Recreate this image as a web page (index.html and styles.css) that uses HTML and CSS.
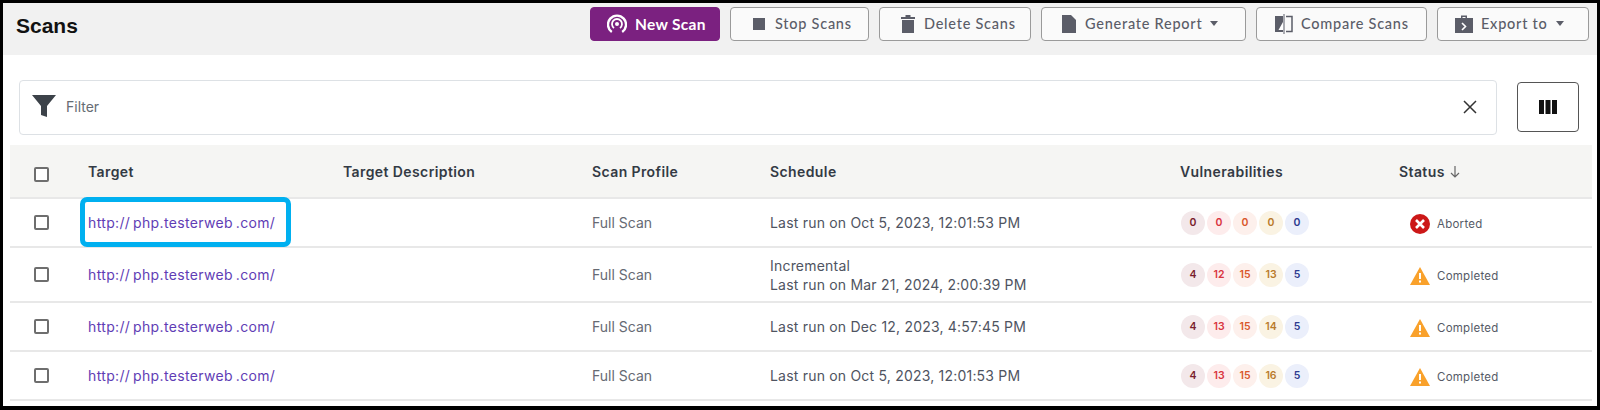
FILE: index.html
```html
<!DOCTYPE html>
<html lang="en">
<head>
<meta charset="utf-8">
<title>Scans</title>
<link rel="stylesheet" href="styles.css">
</head>
<body>
<div class="frame">
  <header class="topbar">
    <h1 class="title">Scans</h1>
    <div class="actions">
      <button class="btn btn-primary w-new"><svg class="ico" viewBox="0 0 20 20"><path d="M4.800 18a9 9 0 1 1 10.400 0" fill="none" stroke="#fff" stroke-width="2.400"/><path d="M7 14a5 5 0 1 1 6 0" fill="none" stroke="#fff" stroke-width="1.800"/><circle cx="10" cy="10" r="2" fill="#fff"/></svg>New Scan</button>
      <button class="btn w-stop"><svg class="ico-s" viewBox="0 0 12 12"><rect width="12" height="12" fill="#5b5d68"/></svg>Stop Scans</button>
      <button class="btn w-del"><svg class="ico-d" viewBox="0 0 16 20"><path d="M5.500 1h5v2H15v2H1V3h4.500zM2 6h12v13H2z" fill="#5b5d68"/></svg>Delete Scans</button>
      <button class="btn w-gen"><svg class="ico-d" viewBox="0 0 16 20"><path d="M1 1h9l5 5v13H1z" fill="#5b5d68"/></svg>Generate Report<span class="caret"></span></button>
      <button class="btn w-cmp"><svg class="ico-c" viewBox="0 0 18 20"><path d="M0 2h8v16H0z" fill="#5b5d68"/><path d="M8 8v8H3.500z" fill="#fff"/><path d="M9 0v20" stroke="#5b5d68" stroke-width="1"/><path d="M11 2.500h6v15h-6" fill="none" stroke="#5b5d68" stroke-width="1.500"/></svg>Compare Scans</button>
      <button class="btn w-exp"><svg class="ico-c" viewBox="0 0 18 20"><path d="M6 4V1.500h6V4h6v15H0V4zM7.500 4h3V3h-3z" fill="#5b5d68"/><path d="M7 9l3.500 3.500L7 16" fill="none" stroke="#fff" stroke-width="1.600"/></svg>Export to<span class="caret"></span></button>
    </div>
  </header>

  <section class="filter-row">
    <div class="filter">
      <svg class="funnel" viewBox="0 0 24 24"><path d="M0 1h24L15 12v11l-6-2V12z" fill="#3c4249"/></svg>
      <span class="filter-label">Filter</span>
      <svg class="clear" viewBox="0 0 14 14"><path d="M1 1l12 12M13 1L1 13" stroke="#333" stroke-width="1.500" fill="none"/></svg>
    </div>
    <button class="col-btn"><svg class="col-ico" viewBox="0 0 18 14"><path d="M0 0h5v14H0zM6.500 0h5v14h-5zM13 0h5v14h-5z" fill="#111"/></svg></button>
  </section>

  <section class="table">
    <div class="row head">
      <div class="cell check"><span class="box"></span></div>
      <div class="cell">Target</div>
      <div class="cell">Target Description</div>
      <div class="cell">Scan Profile</div>
      <div class="cell">Schedule</div>
      <div class="cell">Vulnerabilities</div>
      <div class="cell">Status <svg class="sort" viewBox="0 0 10 12"><path d="M5 0v11M1 7l4 4 4-4" fill="none" stroke="#666" stroke-width="1.200"/></svg></div>
    </div>

    <div class="row r-49">
      <div class="cell check"><span class="box"></span></div>
      <div class="cell target"><a class="link">http:// php.testerweb .com/</a><span class="highlight"></span></div>
      <div class="cell"></div>
      <div class="cell muted">Full Scan</div>
      <div class="cell sched">Last run on Oct 5, 2023, 12:01:53 PM</div>
      <div class="cell badges"><span class="b c">0</span><span class="b h">0</span><span class="b m">0</span><span class="b l">0</span><span class="b i">0</span></div>
      <div class="cell status"><svg class="st" viewBox="0 0 20 20"><circle cx="10" cy="10" r="10" fill="#cc1818"/><path d="M6 6l8 8M14 6l-8 8" stroke="#fff" stroke-width="2.600"/></svg>Aborted</div>
    </div>

    <div class="row r-55">
      <div class="cell check"><span class="box"></span></div>
      <div class="cell"><a class="link">http:// php.testerweb .com/</a></div>
      <div class="cell"></div>
      <div class="cell muted">Full Scan</div>
      <div class="cell sched"><div>Incremental<br>Last run on Mar 21, 2024, 2:00:39 PM</div></div>
      <div class="cell badges"><span class="b c">4</span><span class="b h">12</span><span class="b m">15</span><span class="b l">13</span><span class="b i">5</span></div>
      <div class="cell status"><svg class="st" viewBox="0 0 20 18"><path d="M10 0l10 18H0z" fill="#f9a12b"/><path d="M9 6h2v6H9zM9 13.500h2v2H9z" fill="#fff"/></svg>Completed</div>
    </div>

    <div class="row r-49">
      <div class="cell check"><span class="box"></span></div>
      <div class="cell"><a class="link">http:// php.testerweb .com/</a></div>
      <div class="cell"></div>
      <div class="cell muted">Full Scan</div>
      <div class="cell sched">Last run on Dec 12, 2023, 4:57:45 PM</div>
      <div class="cell badges"><span class="b c">4</span><span class="b h">13</span><span class="b m">15</span><span class="b l">14</span><span class="b i">5</span></div>
      <div class="cell status"><svg class="st" viewBox="0 0 20 18"><path d="M10 0l10 18H0z" fill="#f9a12b"/><path d="M9 6h2v6H9zM9 13.500h2v2H9z" fill="#fff"/></svg>Completed</div>
    </div>

    <div class="row r-49">
      <div class="cell check"><span class="box"></span></div>
      <div class="cell"><a class="link">http:// php.testerweb .com/</a></div>
      <div class="cell"></div>
      <div class="cell muted">Full Scan</div>
      <div class="cell sched">Last run on Oct 5, 2023, 12:01:53 PM</div>
      <div class="cell badges"><span class="b c">4</span><span class="b h">13</span><span class="b m">15</span><span class="b l">16</span><span class="b i">5</span></div>
      <div class="cell status"><svg class="st" viewBox="0 0 20 18"><path d="M10 0l10 18H0z" fill="#f9a12b"/><path d="M9 6h2v6H9zM9 13.500h2v2H9z" fill="#fff"/></svg>Completed</div>
    </div>
  </section>
</div>
</body>
</html>
```

FILE: styles.css
```css
* { box-sizing: border-box; }
html, body { margin: 0; height: 100%; }
body {
  background: #000;
  font-family: Inter, "Liberation Sans", sans-serif;
  overflow: hidden;
}
.frame {
  margin: 3px 3px 0 3px;
  height: 403px;
  background: #fff;
  overflow: hidden;
}
.topbar {
  height: 52px;
  background: #f1f1f1;
  display: flex;
  justify-content: space-between;
  padding: 4px 8px 0 13px;
}
.title {
  margin: 0;
  font: 700 21px/32px "Liberation Sans", sans-serif;
  color: #111;
  padding-top: 3px;
}
.actions { display: flex; gap: 10px; height: 34px; }
.btn {
  height: 34px;
  display: flex;
  align-items: center;
  justify-content: flex-start;
  gap: 8px;
  border: 1px solid #9a9a9a;
  border-radius: 4px;
  background: #fafafa;
  color: #5b5d68;
  font: 500 14.500px Lato, Inter, sans-serif;
  letter-spacing: 0.75px;
  padding: 0 0 1px;
}
.btn-primary {
  background: #7b2180;
  border-color: #7b2180;
  color: #fff;
  font-weight: 700;
  font-size: 15.500px;
  letter-spacing: 0.3px;
  gap: 8px;
}
.w-new { width: 130px; padding-left: 16px; }
.w-stop { width: 139px; padding-left: 22px; gap: 10px; }
.w-del { width: 152px; padding-left: 20px; }
.w-gen { width: 205px; padding-left: 19px; }
.w-cmp { width: 171px; padding-left: 18px; }
.w-exp { width: 152px; padding-left: 17px; }
.ico { width: 20px; height: 20px; flex: none; }
.ico-s { width: 12px; height: 12px; flex: none; }
.ico-d { width: 16px; height: 20px; flex: none; }
.ico-c { width: 18px; height: 20px; flex: none; }
.caret {
  width: 0;
  height: 0;
  border-left: 4.500px solid transparent;
  border-right: 4.500px solid transparent;
  border-top: 5px solid #5b5d68;
}
.filter-row {
  display: flex;
  align-items: center;
  gap: 20px;
  padding: 24px 7px 0 16px;
  height: 79px;
}
.filter {
  width: 1478px;
  height: 55px;
  border: 1px solid #dde1e5;
  border-radius: 4px;
  display: flex;
  align-items: center;
  padding: 0 19px 0 12px;
  margin-top: 1px;
}
.funnel { width: 24px; height: 24px; flex: none; margin-bottom: 2px; }
.filter-label { margin: 0 0 2px 10px; font-size: 14px; color: #666c73; flex: 1; }
.clear { width: 14px; height: 14px; }
.col-btn {
  width: 62px;
  height: 50px;
  border: 1px solid #555;
  border-radius: 4px;
  background: #fff;
  display: flex;
  align-items: center;
  justify-content: center;
  padding: 0;
  margin-top: 1px;
}
.col-ico { width: 18px; height: 14px; }
.table { margin: 11px 5px 0 7px; }
.row {
  display: grid;
  grid-template-columns: 78px 255px 249px 178px 410px 219px 1fr;
  align-items: center;
  border-bottom: 2px solid #e8e8e8;
  font-size: 14px;
  color: #555a66;
}
.head {
  height: 54px;
  background: #f5f5f3;
  font-weight: 600;
  font-size: 14px;
  color: #333a44;
  letter-spacing: 0.4px;
}
.r-49 { height: 49px; }
.r-55 { height: 55px; }
.cell { position: relative; min-width: 0; }
.check { padding-left: 24px; display: flex; }
.head .check { margin-top: 6px; }
.box {
  width: 15px;
  height: 15px;
  border: 2px solid #6e6e6e;
  border-radius: 2px;
  background: #fff;
}
.link { color: #5f3db5; font-size: 14px; letter-spacing: 0.35px; word-spacing: -1.5px; }
.highlight {
  position: absolute;
  left: -8px;
  top: -17px;
  width: 211px;
  height: 50px;
  border: 5px solid #00b0f0;
  border-radius: 7px;
}
.muted { color: #666a73; }
.sched { line-height: 19px; letter-spacing: 0.2px; color: #4f5461; }
.badges { display: flex; gap: 2px; padding-left: 1px; }
.b {
  width: 24px;
  height: 24px;
  border-radius: 50%;
  display: flex;
  align-items: center;
  justify-content: center;
  font-size: 10.500px;
  font-weight: 600;
}
.c { background: #f3e8ea; color: #7a1f2e; }
.h { background: #fdecec; color: #d9343f; }
.m { background: #fdf0ec; color: #d9572b; }
.l { background: #faf3e3; color: #b97a2b; }
.i { background: #ebeffb; color: #2e3b8f; }
.status {
  display: flex;
  align-items: center;
  gap: 7px;
  padding: 2px 0 0 11px;
  font-size: 11.500px;
  color: #555a66;
  letter-spacing: 0.25px;
}
.st { width: 20px; height: 20px; flex: none; }
.sort { width: 10px; height: 12px; margin-left: 1px; vertical-align: -1px; }
```
